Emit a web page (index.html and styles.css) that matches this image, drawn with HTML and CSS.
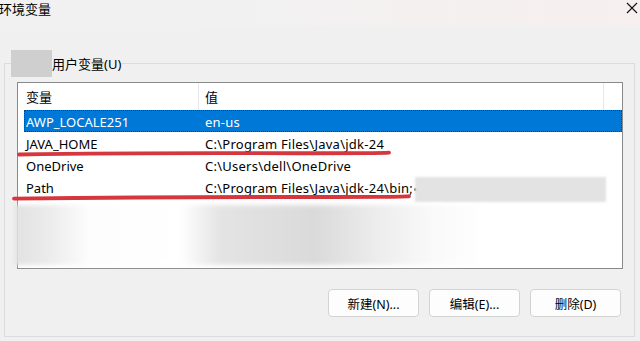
FILE: index.html
```html
<!DOCTYPE html>
<html lang="zh-CN">
<head>
    <meta charset="UTF-8">
    <title>环境变量</title>
    <link rel="stylesheet" href="styles.css">
</head>
<body>
    <div class="titlebar">
        <span class="title">环境变量</span>
        <svg class="close" width="12" height="12" viewBox="0 0 12 12">
            <path d="M1 1 L11 11 M11 1 L1 11" stroke="#111" stroke-width="1.1" fill="none"/>
        </svg>
    </div>

    <fieldset class="group">
        <legend class="group-label"><span class="masked"></span>用户变量(U)</legend>

        <div class="list">
            <div class="list-head">
                <div class="head-cell first">变量</div>
                <div class="head-cell second">值</div>
            </div>
            <div class="rows">
                <div class="row selected">
                    <div class="cell">AWP_LOCALE251</div>
                    <div class="cell value">en-us</div>
                </div>
                <div class="row">
                    <div class="cell">JAVA_HOME</div>
                    <div class="cell value">C:\Program Files\Java\jdk-24</div>
                </div>
                <div class="row">
                    <div class="cell">OneDrive</div>
                    <div class="cell value">C:\Users\dell\OneDrive</div>
                </div>
                <div class="row">
                    <div class="cell">Path</div>
                    <div class="cell value">C:\Program Files\Java\jdk-24\bin;<span class="dot"></span></div>
                </div>
            </div>
            <!-- redacted parts of the screenshot -->
            <div class="blur-cell"></div>
            <div class="blur-rows"></div>
        </div>

        <div class="buttons">
            <button class="btn">新建(N)...</button>
            <button class="btn">编辑(E)...</button>
            <button class="btn">删除(D)</button>
        </div>
    </fieldset>

    <svg class="marks" width="640" height="341" viewBox="0 0 640 341">
        <path d="M19 154.5 Q120 153 250 153.2 T389 152.6" stroke="#d6363d" stroke-width="3.8" fill="none" stroke-linecap="round"/>
        <path d="M14 198.6 Q150 197 280 197 T409 196.2" stroke="#d6363d" stroke-width="3.8" fill="none" stroke-linecap="round"/>
    </svg>
</body>
</html>
```

FILE: styles.css
```css
body {
    margin: 0;
    width: 640px;
    height: 341px;
    overflow: hidden;
    background: #f0f0f0;
    font-family: "Noto Sans", "Noto Sans CJK SC", sans-serif;
    font-size: 13px;
    color: #000;
    position: relative;
}

.titlebar {
    height: 25px;
    display: flex;
    justify-content: space-between;
    align-items: flex-start;
    background: linear-gradient(to right, #f1f1f1, #f3f1f1 50%, #f7eff0);
}

.title {
    font-size: 13px;
    line-height: 18px;
    margin-left: -1px;
}

.close {
    margin: 2px 2px 0 0;
}

.group {
    margin: 25px 5px 0 4px;
    padding: 5px 11px 19px 12px;
    border: 1px solid #dcdcdc;
    min-width: 0;
}

.group-label {
    margin-left: -6px;
    padding: 0;
    display: flex;
    align-items: center;
    height: 27px;
    font-size: 13px;
}

.masked {
    display: inline-block;
    width: 41px;
    height: 27px;
    background: #cfcfcf;
}

.list {
    position: relative;
    width: 606px;
    height: 187px;
    box-sizing: border-box;
    border: 1px solid #8a8a8a;
    background: #fff;
}

.list-head {
    display: grid;
    grid-template-columns: 181px 405px;
    height: 26px;
    line-height: 26px;
}

.head-cell {
    border-right: 1px solid #e8e8e8;
    padding-top: 1px;
    box-sizing: border-box;
    line-height: 26px;
}

.head-cell.first {
    padding-left: 8px;
}

.head-cell.second {
    padding-left: 6px;
}

.rows {
    margin-top: 1px;
}

.row {
    display: grid;
    grid-template-columns: 179px 400px;
    margin-left: 6px;
    height: 22px;
    box-sizing: border-box;
}

.cell {
    padding: 2px 0 0 2px;
    line-height: 20px;
    white-space: nowrap;
    overflow: hidden;
}

.cell.value {
    letter-spacing: 0.25px;
}

.row.selected {
    background: #0078d7;
    color: #fff;
    outline: 1px dotted #1d3f66;
    outline-offset: -1px;
}

.dot {
    display: inline-block;
    width: 3px;
    height: 3px;
    margin-left: 1px;
    vertical-align: middle;
    border-radius: 50%;
    background: #444;
}

.blur-cell {
    position: absolute;
    left: 397px;
    top: 94px;
    width: 191px;
    height: 25px;
    background: #e3e3e3;
    filter: blur(1px);
}

.blur-rows {
    position: absolute;
    left: -3px;
    top: 122px;
    width: 470px;
    height: 60px;
    background: linear-gradient(to right, #e1e1e1 0, #ececec 35px, #fdfdfd 75px, #ffffff 165px, #e4e4e4 205px, #dadada 300px, #ececec 360px, #fafafa 420px, rgba(255, 255, 255, 0) 470px);
    filter: blur(2px);
}

.buttons {
    display: flex;
    justify-content: flex-end;
    gap: 10px;
    margin-top: 20px;
    padding-right: 2px;
}

.btn {
    width: 91px;
    height: 28px;
    border: 1px solid #d3d3d3;
    border-radius: 4px;
    background: #fdfdfd;
    font-family: "Noto Sans", "Noto Sans CJK SC", sans-serif;
    font-size: 12.5px;
    color: #000;
    padding: 0;
}

.marks {
    position: absolute;
    top: 0;
    left: 0;
    pointer-events: none;
}
```
